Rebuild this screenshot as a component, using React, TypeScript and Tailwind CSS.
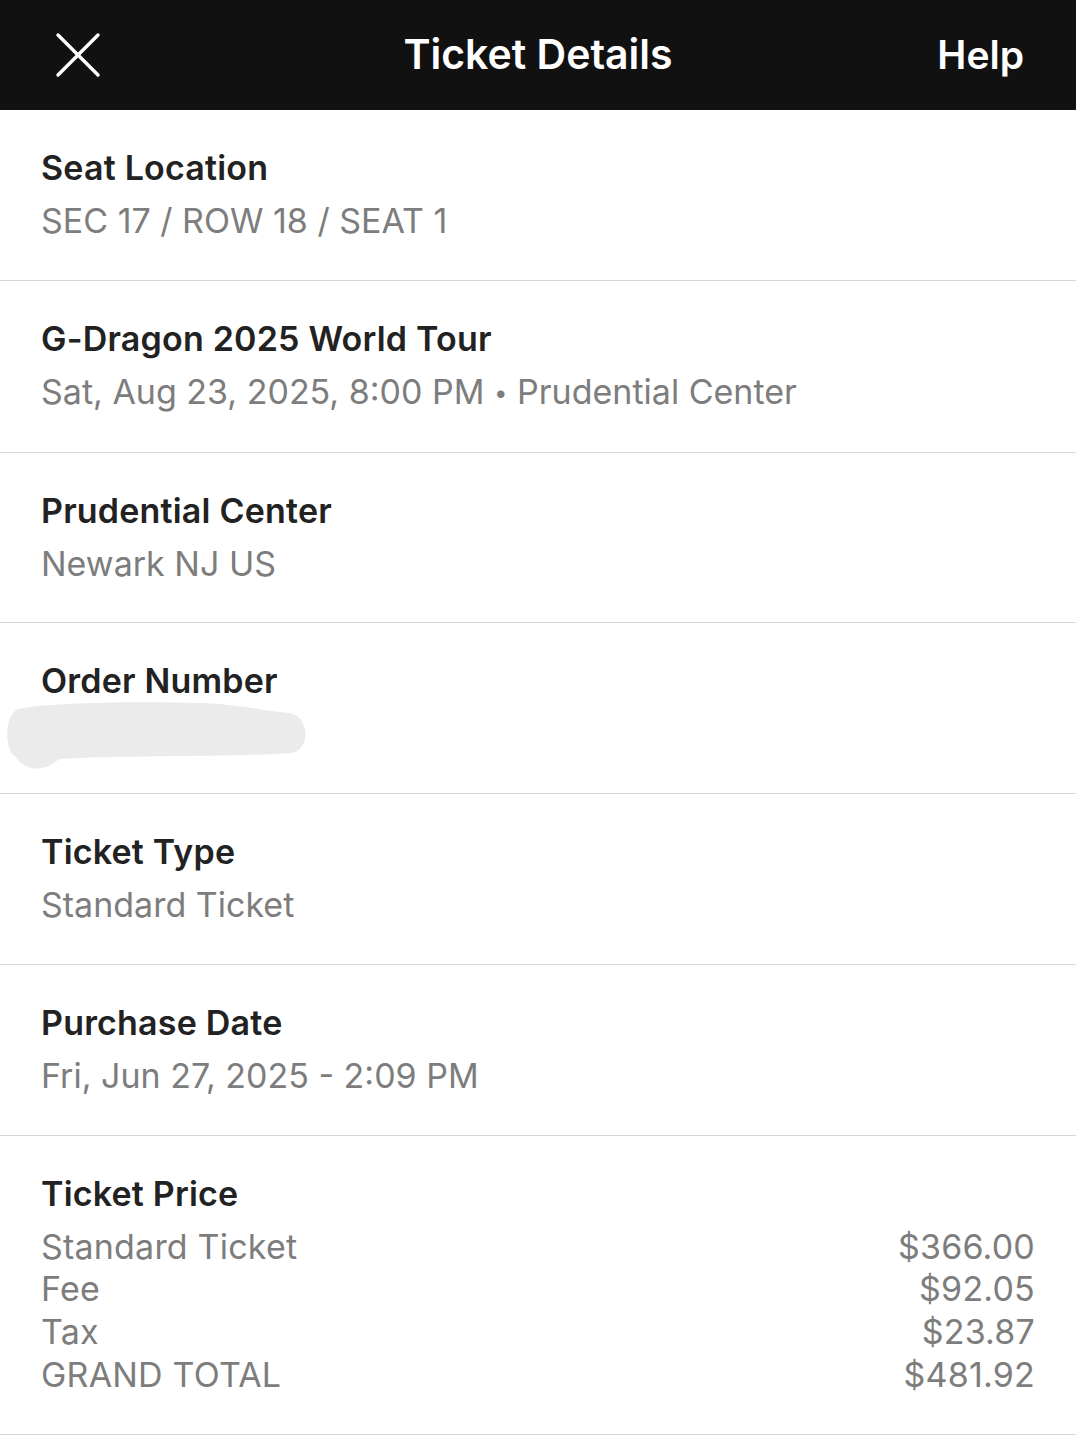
const FONT = { fontFamily: 'Inter, "Noto Sans", "Liberation Sans", sans-serif' };

function Section({ title, children, pb = 'pb-[37.8px]' }: { title: string; children: React.ReactNode; pb?: string }) {
  return (
    <div className={`border-b border-[#d6d6d6] px-[41px] pt-[37px] ${pb}`}>
      <div className="text-[34px] leading-[42px] font-semibold text-[#222] tracking-[0.2px]">{title}</div>
      <div className="mt-[11px]">{children}</div>
    </div>
  );
}

function Sub({ children }: { children: React.ReactNode }) {
  return <div className="text-[34px] leading-[42px] text-[#7d7d7d]">{children}</div>;
}

const prices = [
  ['Standard Ticket', '$366.00'],
  ['Fee', '$92.05'],
  ['Tax', '$23.87'],
  ['GRAND TOTAL', '$481.92'],
];

export default function App() {
  return (
    <div className="w-[1076px] h-[1440px] bg-white overflow-hidden" style={FONT}>
      {/* Header */}
      <div className="h-[110px] bg-[#111] flex items-center justify-between pl-[55px] pr-[52px] relative">
        <svg width="46" height="46" viewBox="0 0 46 46" fill="none" stroke="white" strokeWidth="3.4" strokeLinecap="round">
          <line x1="3" y1="3" x2="43" y2="43" />
          <line x1="43" y1="3" x2="3" y2="43" />
        </svg>
        <div className="absolute left-0 right-0 text-center text-white text-[41px] font-semibold pointer-events-none">
          Ticket Details
        </div>
        <div className="text-white text-[39px] font-semibold">Help</div>
      </div>

      <Section title="Seat Location">
        <Sub>SEC 17 / ROW 18 / SEAT 1</Sub>
      </Section>
      <Section title="G-Dragon 2025 World Tour">
        <Sub>
          Sat, Aug 23, 2025, 8:00 PM <span className="text-[24px] align-[3px]">•</span> Prudential Center
        </Sub>
      </Section>
      <Section title="Prudential Center">
        <Sub>Newark NJ US</Sub>
      </Section>
      <Section title="Order Number">
        <div className="h-[42px] relative">
          <svg className="absolute left-[-37px] top-[-12px]" width="310" height="72" viewBox="0 0 310 72">
            <path
              d="M14 8 C40 2 120 0 200 2 C240 4 260 10 285 12 C305 14 308 48 288 52 C240 56 120 54 55 58 C40 72 20 70 12 56 C0 50 0 14 14 8 Z"
              fill="#ebebeb"
            />
          </svg>
        </div>
      </Section>
      <Section title="Ticket Type">
        <Sub>Standard Ticket</Sub>
      </Section>
      <Section title="Purchase Date">
        <Sub>Fri, Jun 27, 2025 - 2:09 PM</Sub>
      </Section>
      <Section title="Ticket Price" pb="pb-[37px]">
        <div className="flex flex-col">
          {prices.map(([label, value]) => (
            <div key={label} className="flex justify-between text-[34px] leading-[42.7px] text-[#7d7d7d] tracking-[0.2px]">
              <span>{label}</span>
              <span>{value}</span>
            </div>
          ))}
        </div>
      </Section>
    </div>
  );
}
